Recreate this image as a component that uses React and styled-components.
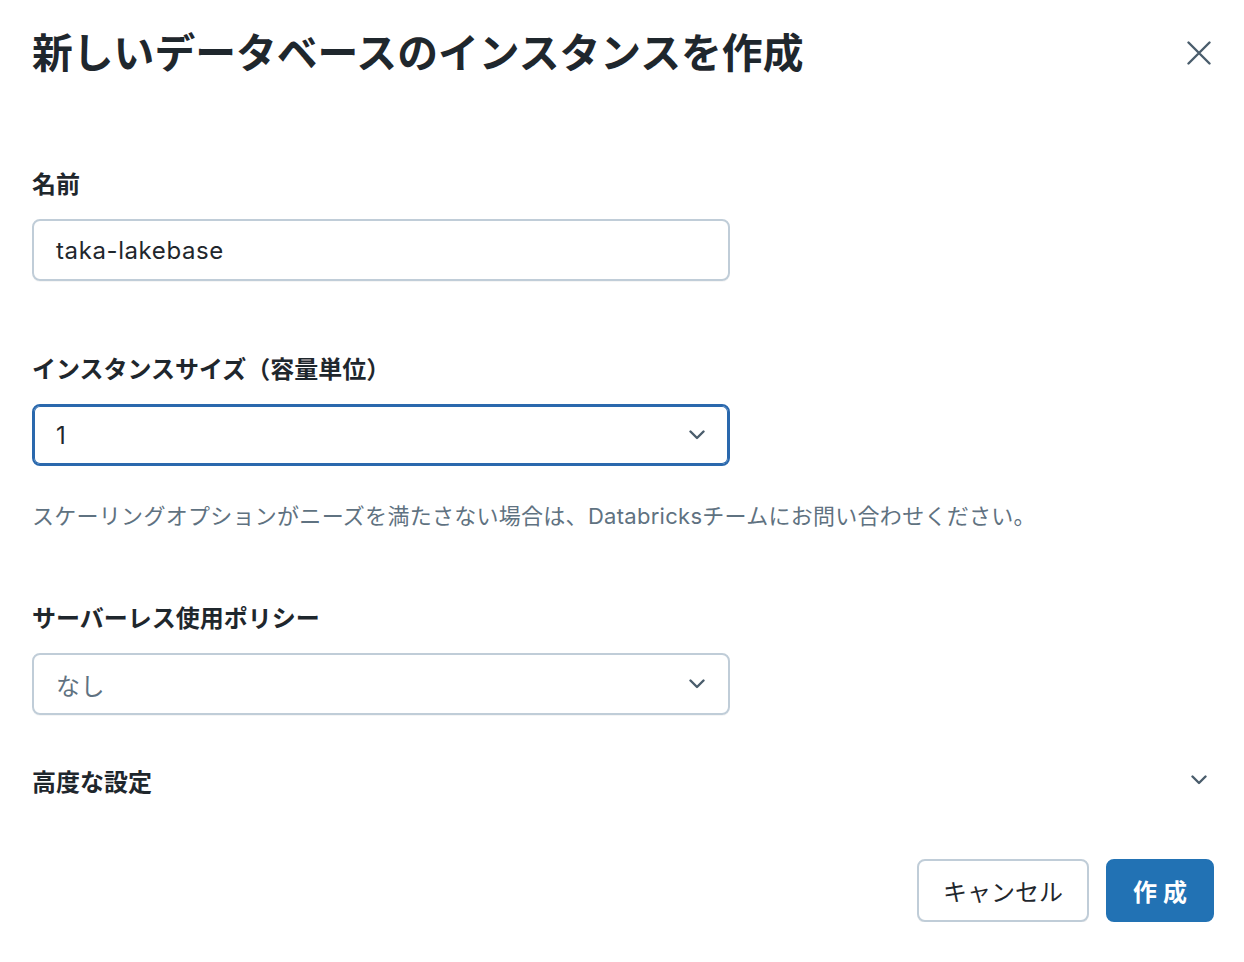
import React from 'react'
import styled, { createGlobalStyle } from 'styled-components'

const GlobalStyle = createGlobalStyle`
  body {
    margin: 0;
    background: #ffffff;
    font-family: Inter, "Noto Sans CJK JP", sans-serif;
    color: #1f272d;
  }
`

const Modal = styled.div`
  display: flex;
  flex-direction: column;
  padding: 0 30px 0 32px;
`

const Header = styled.div`
  display: flex;
  align-items: center;
  justify-content: space-between;
  padding-top: 27px;
`

const Title = styled.h1`
  margin: 0;
  font-size: 40.8px;
  line-height: 52px;
  font-weight: 700;
  color: #1f272d;
`

const IconButton = styled.button`
  display: flex;
  align-items: center;
  justify-content: center;
  width: 30px;
  height: 30px;
  padding: 0;
  border: none;
  background: transparent;
  color: #4a5d6c;
  cursor: pointer;
`

const Form = styled.div`
  display: flex;
  flex-direction: column;
  padding-top: 90px;
`

const Field = styled.div`
  display: flex;
  flex-direction: column;
  margin-bottom: ${(p) => p.$spacing || 0}px;
`

const Label = styled.label`
  font-size: 24px;
  line-height: 32px;
  font-weight: 600;
  margin-bottom: 18px;
`

const Control = styled.div`
  box-sizing: border-box;
  display: flex;
  align-items: center;
  justify-content: space-between;
  width: 698px;
  height: 62px;
  padding: 0 23px 0 22px;
  border: 2px solid ${(p) => (p.$focused ? '#2a68ad' : '#c0cdd8')};
  box-shadow: ${(p) => (p.$focused ? 'inset 0 0 0 1px #2a68ad' : '0 1px 0 rgba(0, 0, 0, 0.04)')};
  border-radius: 8px;
  font-size: 24px;
  letter-spacing: 0.6px;
  color: ${(p) => (p.$placeholder ? '#5f7281' : '#1f272d')};
`

const Helper = styled.p`
  margin: 34px 0 0;
  font-size: 22px;
  line-height: 32px;
  letter-spacing: 0.28px;
  color: #5f7281;
`

const AdvancedRow = styled.div`
  display: flex;
  align-items: center;
  justify-content: space-between;
  height: 32px;
  font-size: 24px;
  font-weight: 600;
`

const IconSlot = styled.span`
  display: flex;
  align-items: center;
  justify-content: center;
  width: 30px;
  color: #4a5d6c;
`

const Footer = styled.div`
  display: flex;
  justify-content: flex-end;
  gap: 17px;
  margin-top: 63px;
`

const Button = styled.button`
  box-sizing: border-box;
  height: 63px;
  padding: 0 ${(p) => (p.$primary ? 25 : 24)}px;
  border-radius: 8px;
  border: 2px solid ${(p) => (p.$primary ? '#2272b4' : '#c0cdd8')};
  background: ${(p) => (p.$primary ? '#2272b4' : '#ffffff')};
  color: ${(p) => (p.$primary ? '#ffffff' : '#1f272d')};
  font-family: Inter, "Noto Sans CJK JP", sans-serif;
  font-size: 24px;
  font-weight: ${(p) => (p.$primary ? 600 : 400)};
  cursor: pointer;
  box-shadow: ${(p) => (p.$primary ? 'none' : '0 1px 0 rgba(0, 0, 0, 0.05)')};
`

const Chevron = () => (
  <svg width="16" height="10" viewBox="0 0 16 10" fill="none">
    <polyline
      points="1.5,1.5 8,8 14.5,1.5"
      stroke="currentColor"
      strokeWidth="2.4"
      strokeLinecap="round"
      strokeLinejoin="round"
    />
  </svg>
)

const CloseIcon = () => (
  <svg width="24" height="24" viewBox="0 0 24 24" fill="none">
    <path d="M1.5 1.5 L22.5 22.5 M22.5 1.5 L1.5 22.5" stroke="currentColor" strokeWidth="2.4" strokeLinecap="round" />
  </svg>
)

const SelectArrow = styled.span`
  display: flex;
  color: #4a5d6c;
`

const App = () => {
  return (
    <>
      <GlobalStyle />
      <Modal>
        <Header>
          <Title>新しいデータベースのインスタンスを作成</Title>
          <IconButton aria-label="close">
            <CloseIcon />
          </IconButton>
        </Header>
        <Form>
          <Field $spacing={73}>
            <Label>名前</Label>
            <Control>taka-lakebase</Control>
          </Field>
          <Field $spacing={71}>
            <Label>インスタンスサイズ（容量単位）</Label>
            <Control $focused>
              <span>1</span>
              <SelectArrow><Chevron /></SelectArrow>
            </Control>
            <Helper>スケーリングオプションがニーズを満たさない場合は、Databricksチームにお問い合わせください。</Helper>
          </Field>
          <Field $spacing={49}>
            <Label>サーバーレス使用ポリシー</Label>
            <Control $placeholder>
              <span>なし</span>
              <SelectArrow><Chevron /></SelectArrow>
            </Control>
          </Field>
          <AdvancedRow>
            <span>高度な設定</span>
            <IconSlot><Chevron /></IconSlot>
          </AdvancedRow>
        </Form>
        <Footer>
          <Button>キャンセル</Button>
          <Button $primary>作 成</Button>
        </Footer>
      </Modal>
    </>
  )
}

export default App
